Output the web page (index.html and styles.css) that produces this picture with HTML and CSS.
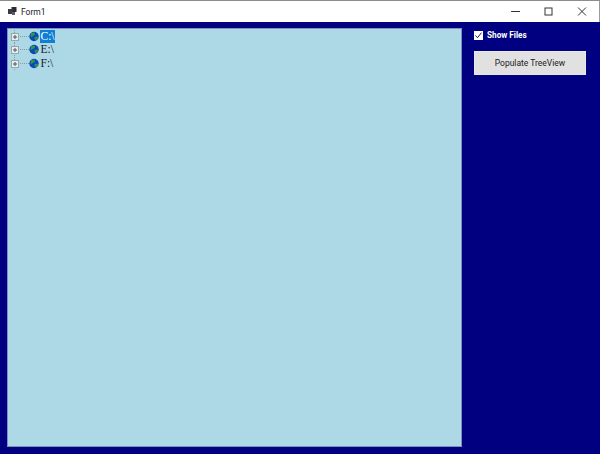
FILE: index.html
```html
<!DOCTYPE html>
<html lang="en">
<head>
<meta charset="utf-8">
<title>Form1</title>
<link rel="stylesheet" href="styles.css">
</head>
<body>
<div class="window">
  <header class="titlebar">
    <svg class="app-icon" width="9" height="8" viewBox="0 0 9 8">
      <rect x="3.500" y="0" width="5" height="5" fill="#2c2c36"/>
      <rect x="0" y="2" width="5" height="5" fill="#3a3a45"/>
      <rect x="4" y="5" width="3" height="3" fill="#5c5c66"/>
    </svg>
    <span class="title">Form1</span>
    <div class="controls">
      <svg class="ctl" width="33" height="21" viewBox="0 0 33 21"><path d="M12 10.500h9" stroke="#333" fill="none"/></svg>
      <svg class="ctl" width="33" height="21" viewBox="0 0 33 21"><rect x="13" y="7" width="7" height="7" stroke="#333" fill="none" stroke-width="1"/></svg>
      <svg class="ctl" width="33" height="21" viewBox="0 0 33 21"><path d="M13 6.500l8 8M21 6.500l-8 8" stroke="#333" fill="none"/></svg>
    </div>
  </header>
  <main class="client">
    <section class="tree">
      <div class="node">
        <svg class="glyph" width="29" height="13" viewBox="0 0 29 13"><use href="#branch"/></svg>
        <span class="label selected">C:\</span>
      </div>
      <div class="node">
        <svg class="glyph" width="29" height="13" viewBox="0 0 29 13"><use href="#branch"/></svg>
        <span class="label">E:\</span>
      </div>
      <div class="node">
        <svg class="glyph" width="29" height="13" viewBox="0 0 29 13"><use href="#branch"/></svg>
        <span class="label">F:\</span>
      </div>
    </section>
    <aside class="side">
      <label class="check">
        <svg class="box" width="9" height="9" viewBox="0 0 9 9"><rect width="9" height="9" fill="#fff"/><path d="M1.500 4.500l2 2.200 4-5" stroke="#222" fill="none"/></svg>
        <span>Show Files</span>
      </label>
      <button class="populate">Populate TreeView</button>
    </aside>
  </main>
</div>
<svg class="defs" width="0" height="0">
  <defs>
    <g id="branch">
      <path d="M7 6.500h11M3.500 0v3M3.500 10v3" stroke="#8b9aa2" stroke-dasharray="1 1" fill="none"/>
      <rect x="0.500" y="3.500" width="7" height="7" fill="#e4eef2" stroke="#9aa6ac"/>
      <path d="M2 7h4M4 5v4" stroke="#555" fill="none"/>
      <circle cx="23" cy="6.500" r="4.700" fill="#0a47c0"/>
      <path d="M20 3.500c2-1.500 3.500-1 4 0s-1 2-2 2.500-2 1.500-2.500 .5zM24 7c1.500-.5 3-.5 3 .5s-1.500 3-2.500 2.500-1.500-2.500-.5-3z" fill="#2f9a3c"/>
    </g>
  </defs>
</svg>
</body>
</html>
```
FILE: styles.css
```css
* { box-sizing: border-box; }
html, body { margin: 0; padding: 0; }
body { width: 600px; height: 454px; overflow: hidden; background: #000080; }
.window { width: 600px; height: 454px; display: flex; flex-direction: column; border-top: 1px solid #8c8c8c; }
.titlebar { height: 21px; flex: none; background: #fff; display: flex; align-items: center; padding-left: 8px; border-right: 1px solid #9a9a9a; }
.app-icon { flex: none; margin-right: 4px; margin-top: -1px; }
.title { font: 8.500px/12px Roboto, "Noto Sans", sans-serif; color: #222; }
.controls { margin-left: auto; display: flex; margin-right: 1px; }
.ctl { display: block; }
.client { flex: 1; background: #000080; display: flex; padding: 6px 0 7px 7px; }
.tree { width: 455px; background: #add8e6; border: 1px solid #7f8fc0; padding: 1px 0 0 3px; }
.node { display: flex; align-items: center; height: 13.300px; }
.glyph { flex: none; display: block; }
.label { font: 11.500px/13px "Liberation Serif", serif; color: #1a1a1a; padding: 0 0.500px; }
.selected { background: #0f7fd6; color: #fff; }
.side { width: 138px; flex: none; padding: 1px 0 0 12px; display: flex; flex-direction: column; gap: 10px; }
.check { display: flex; align-items: center; gap: 4px; height: 12px; color: #fff; font: 700 8.200px/12px Roboto, "Noto Sans", sans-serif; }
.box { flex: none; }
.populate { width: 112px; height: 24px; padding: 0; background: #e1e1e1; border: 1px solid #e8e8e8; color: #222; font: 8.500px/12px Roboto, "Noto Sans", sans-serif; }
.defs { position: absolute; }
```
